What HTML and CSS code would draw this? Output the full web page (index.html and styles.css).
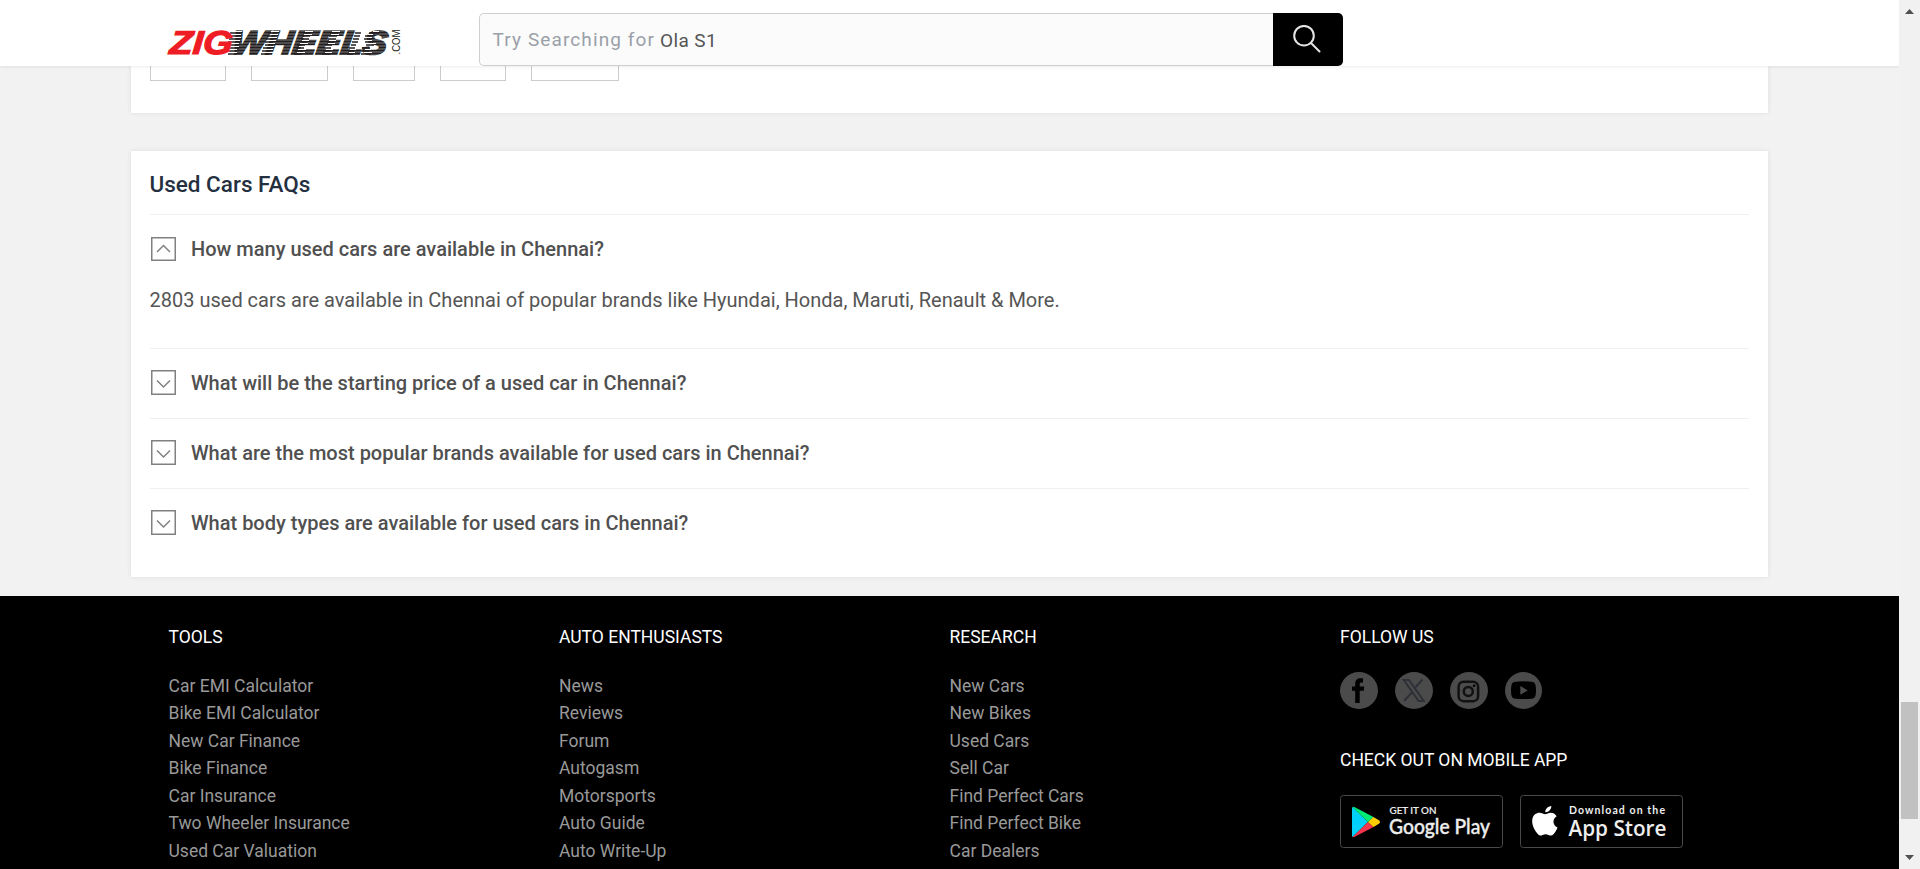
FILE: index.html
```html
<!DOCTYPE html>
<html lang="en">
<head>
<meta charset="utf-8">
<title>Used Cars in Chennai</title>
<link rel="stylesheet" href="styles.css">
</head>
<body>
<div class="viewport">
  <div class="page">
    <header class="header">
      <svg class="logo" width="236" height="28" viewBox="0 0 236 28">
        <defs>
          <pattern id="speed" width="200" height="3" patternUnits="userSpaceOnUse" y="2.5">
            <rect width="200" height="1" fill="#fff" fill-opacity=".4"/>
          </pattern>
        </defs>
        <text class="logo-wheels" transform="translate(63 26) skewX(-8)" x="0" y="0" textLength="155" lengthAdjust="spacingAndGlyphs">WHEELS</text>
        <rect x="58" y="1" width="167" height="26" fill="url(#speed)"/>
        <path class="logo-tail" d="M62 5h12M61 8h12M61 11h12M60 14h12M59 17h12M59 20h12M59 23h10M60 26h9M100 5h9M99 8h8M98 11h8M97 14h8M97 17h8M95 20h8M94 23h8M93 26h8M135 5h8M134 8h8M133 11h8M132 14h7M129 17h8M128 20h8M127 23h8M126 26h8M162 5h8M161 8h8M160 11h8M159 14h7M157 17h7M156 20h7M155 23h7M154 26h8M187 5h6M186 8h6M185 11h6M184 14h6M183 17h5M181 20h6M180 23h6M179 26h6M201 5h10M197 8h8M196 11h8M197 14h8M198 17h8M194 20h8M193 23h8M193 26h10"/>
        <path class="logo-gap" d="M62 3.500h12M61 6.500h12M61 9.500h12M60 12.500h12M59 15.500h12M59 18.500h12M59 21.500h10M60 24.500h9M103 3.500h8M102 6.500h8M101 9.500h8M100 12.500h8M99 15.500h8M98 18.500h8M97 21.500h8M97 24.500h8M137 3.500h8M136 6.500h8M135 9.500h8M134 12.500h7M132 15.500h8M131 18.500h8M130 21.500h8M129 24.500h8M164 3.500h8M163 6.500h8M162 9.500h8M161 12.500h7M160 15.500h7M159 18.500h7M158 21.500h7M157 24.500h7M189 3.500h6M188 6.500h6M187 9.500h6M186 12.500h6M185 15.500h5M183 18.500h6M182 21.500h6M181 24.500h6M205 3.500h6M200 6.500h5M198 9.500h6M198 12.500h6M200 15.500h8M197 21.500h6M196 24.500h8"/>
        <text class="logo-zig" transform="translate(1 26) skewX(-4)" x="0" y="0" textLength="63" lengthAdjust="spacingAndGlyphs">ZIG</text>
        <text class="logo-com" transform="translate(232 26.500) rotate(-90)" textLength="25" lengthAdjust="spacingAndGlyphs">.COM</text>
      </svg>
      <div class="search">
        <div class="search-field"><span class="search-hint">Try Searching for</span><span class="search-term">Ola S1</span></div>
        <button class="search-button" aria-label="Search">
          <svg width="28" height="28" viewBox="0 0 28 28"><circle cx="11" cy="10.700" r="9.800"/><path d="M18 18L26.500 26.500"/></svg>
        </button>
      </div>
    </header>
    <main class="main">
      <section class="card chips-card">
        <div class="chips"><i class="chip chip-a"></i><i class="chip chip-b"></i><i class="chip chip-c"></i><i class="chip chip-d"></i><i class="chip chip-e"></i></div>
      </section>
      <section class="card faq">
        <h2 class="faq-title">Used Cars FAQs</h2>
        <div class="faq-item faq-open">
          <h3 class="question"><svg class="toggle" width="25" height="24" viewBox="0 0 25 24"><rect x=".75" y=".75" width="23.500" height="22.500"/><path d="M6 15l6.500-6.500L19 15"/></svg><span>How many used cars are available in Chennai?</span></h3>
          <p class="answer">2803 used cars are available in Chennai of popular brands like Hyundai, Honda, Maruti, Renault &amp; More.</p>
        </div>
        <div class="faq-item">
          <h3 class="question"><svg class="toggle" width="25" height="25" viewBox="0 0 25 25"><rect x=".75" y=".75" width="23.500" height="23.500"/><path d="M6 10.500l6.500 6.500L19 10.500"/></svg><span>What will be the starting price of a used car in Chennai?</span></h3>
        </div>
        <div class="faq-item">
          <h3 class="question"><svg class="toggle" width="25" height="25" viewBox="0 0 25 25"><rect x=".75" y=".75" width="23.500" height="23.500"/><path d="M6 10.500l6.500 6.500L19 10.500"/></svg><span>What are the most popular brands available for used cars in Chennai?</span></h3>
        </div>
        <div class="faq-item">
          <h3 class="question"><svg class="toggle" width="25" height="25" viewBox="0 0 25 25"><rect x=".75" y=".75" width="23.500" height="23.500"/><path d="M6 10.500l6.500 6.500L19 10.500"/></svg><span>What body types are available for used cars in Chennai?</span></h3>
        </div>
      </section>
    </main>
    <footer class="footer">
      <div class="column">
        <h4 class="footer-title">TOOLS</h4>
        <ul class="links"><li>Car EMI Calculator</li><li>Bike EMI Calculator</li><li>New Car Finance</li><li>Bike Finance</li><li>Car Insurance</li><li>Two Wheeler Insurance</li><li>Used Car Valuation</li></ul>
      </div>
      <div class="column">
        <h4 class="footer-title">AUTO ENTHUSIASTS</h4>
        <ul class="links"><li>News</li><li>Reviews</li><li>Forum</li><li>Autogasm</li><li>Motorsports</li><li>Auto Guide</li><li>Auto Write-Up</li></ul>
      </div>
      <div class="column">
        <h4 class="footer-title">RESEARCH</h4>
        <ul class="links"><li>New Cars</li><li>New Bikes</li><li>Used Cars</li><li>Sell Car</li><li>Find Perfect Cars</li><li>Find Perfect Bike</li><li>Car Dealers</li></ul>
      </div>
      <div class="column">
        <h4 class="footer-title">FOLLOW US</h4>
        <div class="social">
          <svg width="38" height="37" viewBox="0 0 38 37"><ellipse class="disc" cx="19" cy="18.500" rx="19" ry="18.500"/><path d="M15.200 31V18.800H12v-4.300h3.200v-2.700c0-3.600 2.100-5.500 5.300-5.500h2.500v4.200h-1.500c-1.400 0-1.800.7-1.800 1.900v2.100h4.500l-.5 4.300h-4V31z"/></svg>
          <svg width="38" height="37" viewBox="0 0 38 37"><ellipse class="disc" cx="19" cy="18.500" rx="19" ry="18.500"/><path class="x-mark" d="M8.800 8h5.200L28.800 29h-5.200zM27.500 7.500L19.800 16M17.300 20L9 29"/></svg>
          <svg width="38" height="37" viewBox="0 0 38 37"><ellipse class="disc" cx="19" cy="18.500" rx="19" ry="18.500"/><g class="camera"><rect x="8.600" y="9.700" width="19.500" height="19.500" rx="5"/><circle cx="18.300" cy="19.400" r="4.500"/></g><circle cx="24.100" cy="13.700" r="1.300"/></svg>
          <svg width="38" height="37" viewBox="0 0 38 37"><ellipse class="disc" cx="18.500" cy="18.500" rx="18.500" ry="18.500"/><path d="M9 10Q18.500 8.700 28 10Q30 10.500 30.500 13Q31.500 18.500 30.500 23.500Q30 26 28 26.400Q18.500 27.500 9 26.400Q7 26 6.500 23.500Q5.500 18.500 6.500 13Q7 10.500 9 10z"/><path class="disc" d="M15.300 14v8.700l7.500-4.300z"/></svg>
        </div>
        <h4 class="footer-title app-title">CHECK OUT ON MOBILE APP</h4>
        <div class="badges">
          <svg class="badge" width="163" height="53" viewBox="0 0 163 53">
            <rect class="badge-frame" x=".5" y=".5" width="162" height="52" rx="3"/>
            <path fill="#00d1fa" d="M12.500 12q-.5.5-.5 1.500v27q0 1 .5 1.500L28 27z"/>
            <path fill="#00ee76" d="M12.500 12q1-.5 2.300.2L33.500 22 28 27z"/>
            <path fill="#f5344e" d="M12.500 42q1 .5 2.300-.2L33.500 32 28 27z"/>
            <path fill="#ffce00" d="M33.500 22l5.800 3.500q1.600 1.500 0 3L33.500 32 28 27z"/>
            <text class="badge-small" x="49.500" y="18.500" textLength="47" lengthAdjust="spacingAndGlyphs">GET IT ON</text>
            <text class="badge-google" x="49" y="39" textLength="101" lengthAdjust="spacingAndGlyphs">Google Play</text>
          </svg>
          <svg class="badge" width="163" height="53" viewBox="0 0 163 53">
            <rect class="badge-frame" x=".5" y=".5" width="162" height="52" rx="3"/>
            <path fill="#fff" d="M31.300 11c.3 3-2.600 6.400-6 6.200-.3-3 2.700-6 6-6.200zM36.700 21.300c-4.800 3-4 9.100.8 11.200-.9 2.700-2.400 5.200-4.300 7-1.300 1.300-2.800 1.200-4.600.4-2-1-4-1-6 0-1.800.8-3.200.9-4.600-.6-6-6.200-8-15.800-3-20 2.600-2.200 5.600-1.900 8.200-.6 1.300.7 2.600.6 4 0 3.600-1.600 7.100-1 9.500 2.600z"/>
            <text class="badge-small badge-download" x="49" y="18.500" textLength="96" lengthAdjust="spacing">Download on the</text>
            <text class="badge-apple" x="48.500" y="41" textLength="98" lengthAdjust="spacingAndGlyphs">App Store</text>
          </svg>
        </div>
      </div>
    </footer>
  </div>
  <aside class="scrollbar">
    <svg width="9" height="5" viewBox="0 0 9 5"><path d="M0 5L4.500 0 9 5z"/></svg>
    <div class="thumb"></div>
    <svg width="9" height="5" viewBox="0 0 9 5"><path d="M0 0L4.500 5 9 0z"/></svg>
  </aside>
</div>
</body>
</html>
```
FILE: styles.css
```css
* { box-sizing: border-box; }
body { margin: 0; overflow: hidden; background: #f2f2f2; font-family: Roboto, "Liberation Sans", sans-serif; }
h2, h3, h4, p, ul { margin: 0; padding: 0; }
.viewport { display: flex; width: 1920px; height: 869px; overflow: hidden; }
.page { display: flex; flex-direction: column; width: 1899px; height: 869px; overflow: hidden; }

.header { position: relative; z-index: 2; display: flex; flex: none; height: 66px; padding: 13px 0 0 168px; background: #fff; box-shadow: 0 1px 3px rgba(0, 0, 0, .08); }
.logo { flex: none; width: 236px; height: 28px; margin-top: 15px; overflow: visible; }
.logo text { font-family: "Liberation Sans", Arial, sans-serif; font-style: italic; font-weight: 700; font-size: 33px; }
.logo .logo-zig { fill: #ee1c25; stroke: #ee1c25; stroke-width: 1.200px; }
.logo .logo-wheels { fill: #231f20; stroke: #231f20; stroke-width: 2px; }
.logo .logo-com { fill: #231f20; font-style: normal; font-weight: 400; font-size: 10px; }
.logo-tail { stroke: #231f20; stroke-width: 1.500px; fill: none; }
.logo-gap { stroke: #fff; stroke-width: 1px; fill: none; }
.search { display: flex; width: 864px; height: 53px; margin-left: 75px; }
.search-field { display: flex; align-items: center; flex: 1; padding-left: 12.500px; border: 1px solid #cfcfcf; border-right: 0; border-radius: 5px 0 0 5px; background: #fbfbfb; font-size: 19px; line-height: 24px; }
.search-hint { width: 167.500px; color: #9a9fa8; letter-spacing: 1.110px; white-space: nowrap; }
.search-term { padding-top: 2px; color: #555; letter-spacing: .4px; }
.search-button { display: flex; width: 70px; height: 53px; padding: 12px 0 0 20px; border: 0; border-radius: 0 5px 5px 0; background: #000; }
.search-button svg { fill: none; stroke: #e4e4e4; stroke-width: 2px; stroke-linecap: round; }

.main { display: flex; flex-direction: column; gap: 38px; flex: none; height: 530px; padding: 0 131px; }
.card { background: #fff; box-shadow: 0 0 5px rgba(0, 0, 0, .09); }
.chips-card { height: 47px; padding-left: 19px; }
.chips { display: flex; gap: 25px; height: 15px; }
.chip { height: 15px; border: 1px solid #ccc; border-top: 0; }
.chip-a { width: 76px; }
.chip-b { width: 77px; }
.chip-c { width: 62px; }
.chip-d { width: 66px; }
.chip-e { width: 88px; }

.faq { height: 426px; padding: 0 19px; }
.faq-title { height: 63px; padding-top: 18px; margin-left: -.5px; color: #24303f; font-weight: 500; font-size: 22.500px; line-height: 30px; }
.faq-item { height: 70px; padding: 21px 0 0 1px; border-top: 1px solid #efefef; }
.faq-open { height: 134px; }
.question { display: flex; align-items: flex-start; gap: 15px; height: 27px; color: #505050; font-weight: 500; font-size: 20px; line-height: 27px; white-space: nowrap; }
.toggle { flex: none; fill: none; stroke: #808080; stroke-width: 1.500px; }
.faq-open .toggle { margin-top: 1px; }
.answer { margin: 23px 0 0 -1.500px; color: #555; font-size: 20px; line-height: 28px; white-space: nowrap; }

.footer { display: grid; grid-template-columns: repeat(4, 390.500px); flex: none; height: 273px; padding-left: 168.500px; background: #000; }
.footer-title { padding-top: 29px; color: #fff; font-weight: 400; font-size: 17.500px; line-height: 24px; white-space: nowrap; }
.links { padding-top: 23.500px; list-style: none; color: #999; font-size: 17.500px; line-height: 27.500px; }
.social { display: flex; gap: 17px; padding-top: 23px; }
.disc { fill: #4b4b4b; }
.x-mark { fill: none; stroke: #2d3037; stroke-width: 2px; }
.camera { fill: none; stroke: #111; stroke-width: 2.500px; }
.app-title { padding-top: 39px; }
.badges { display: flex; gap: 17px; padding-top: 23px; }
.badge-frame { fill: #000; stroke: #4a4a4a; stroke-width: 1px; }
.badge text { fill: #eee; }
.badge-small { font: 500 10px Lato, sans-serif; stroke: #eee; stroke-width: .2px; }
.badge-download { font-size: 10.500px; font-weight: 700; stroke: none; }
.badge-google { font: 500 20.500px Lato, sans-serif; stroke: #eee; stroke-width: .4px; }
.badge-apple { font: 600 22px "Open Sans", sans-serif; }

.scrollbar { display: flex; flex-direction: column; align-items: center; width: 21px; height: 869px; padding: 9px 0; background: #f1f1f1; }
.scrollbar svg { flex: none; fill: #505050; }
.thumb { width: 17px; height: 117px; margin: 688px 0 36px; background: #c1c1c1; }
```
